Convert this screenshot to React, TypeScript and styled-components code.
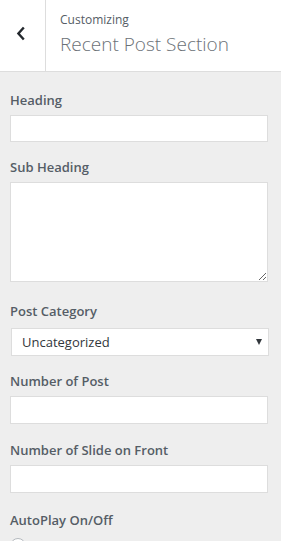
import styled, { createGlobalStyle } from "styled-components";

const GlobalStyle = createGlobalStyle`
  html, body {
    margin: 0;
    padding: 0;
    background: #eeeeee;
    font-family: "Open Sans", "Noto Sans", sans-serif;
  }
  * {
    box-sizing: border-box;
  }
`;

const Panel = styled.div`
  width: 281px;
  height: 541px;
  overflow: hidden;
  background: #eeeeee;
`;

const Header = styled.div`
  display: flex;
  height: 72px;
  background: #ffffff;
  border-bottom: 1px solid #dddddd;
`;

const BackButton = styled.button`
  width: 46px;
  flex-shrink: 0;
  display: flex;
  align-items: center;
  justify-content: center;
  padding: 0 4px 4px 0;
  background: #ffffff;
  border: none;
  border-right: 1px solid #dddddd;
  color: #23282d;
`;

const TitleBlock = styled.div`
  display: flex;
  flex-direction: column;
  padding: 11px 0 0 14px;
`;

const Crumb = styled.span`
  font-size: 12px;
  line-height: 18px;
  color: #555d66;
`;

const Title = styled.h3`
  margin: 3px 0 0;
  font-size: 19px;
  line-height: 24px;
  font-weight: 300;
  color: #6b7177;
`;

const Controls = styled.div`
  display: flex;
  flex-direction: column;
  padding: 18px 13px 0 10px;
`;

const Control = styled.div<{ $gap?: number }>`
  display: flex;
  flex-direction: column;
  margin-bottom: ${({ $gap }) => $gap ?? 15}px;
`;

const Label = styled.label`
  font-size: 13px;
  line-height: 20px;
  font-weight: 600;
  color: #555d66;
  margin-bottom: 5px;
`;

const TextInput = styled.input<{ $height?: number }>`
  width: 100%;
  height: ${({ $height }) => $height ?? 27}px;
  background: #ffffff;
  border: 1px solid #dddddd;
  border-radius: 0;
  outline: none;
`;

const TextArea = styled.textarea`
  width: 100%;
  height: 100px;
  margin: 0 0 4px;
  background: #ffffff;
  border: 1px solid #dddddd;
  border-radius: 0;
  resize: vertical;
  outline: none;
`;

const SelectBox = styled.div`
  position: relative;
  display: flex;
  align-items: center;
  height: 28px;
  margin: 2px -1px 0 1px;
  padding: 0 10px;
  background: #ffffff;
  border: 1px solid #dddddd;
  font-size: 13px;
  color: #32373c;
`;

const Caret = styled.span`
  position: absolute;
  right: 6px;
  top: 10px;
  width: 0;
  height: 0;
  border-left: 3px solid transparent;
  border-right: 3px solid transparent;
  border-top: 6px solid #32373c;
`;

const Radio = styled.span`
  display: block;
  width: 16px;
  height: 16px;
  margin-top: 3px;
  border-radius: 50%;
  border: 1px solid #b4b9be;
  background: #ffffff;
`;

export default function App() {
  return (
    <>
      <GlobalStyle />
      <Panel>
        <Header>
          <BackButton aria-label="Back">
            <svg width="10" height="15" viewBox="0 0 10 15">
              <path d="M7.8 1.5 L2.4 7.5 L7.8 13.5" fill="none" stroke="#23282d" strokeWidth="2.4" />
            </svg>
          </BackButton>
          <TitleBlock>
            <Crumb>Customizing</Crumb>
            <Title>Recent Post Section</Title>
          </TitleBlock>
        </Header>
        <Controls>
          <Control>
            <Label>Heading</Label>
            <TextInput type="text" />
          </Control>
          <Control>
            <Label>Sub Heading</Label>
            <TextArea />
          </Control>
          <Control>
            <Label>Post Category</Label>
            <SelectBox>
              Uncategorized
              <Caret />
            </SelectBox>
          </Control>
          <Control $gap={16}>
            <Label>Number of Post</Label>
            <TextInput type="text" $height={28} />
          </Control>
          <Control $gap={17}>
            <Label>Number of Slide on Front</Label>
            <TextInput type="text" $height={28} />
          </Control>
          <Control>
            <Label>AutoPlay On/Off</Label>
            <Radio />
          </Control>
        </Controls>
      </Panel>
    </>
  );
}
